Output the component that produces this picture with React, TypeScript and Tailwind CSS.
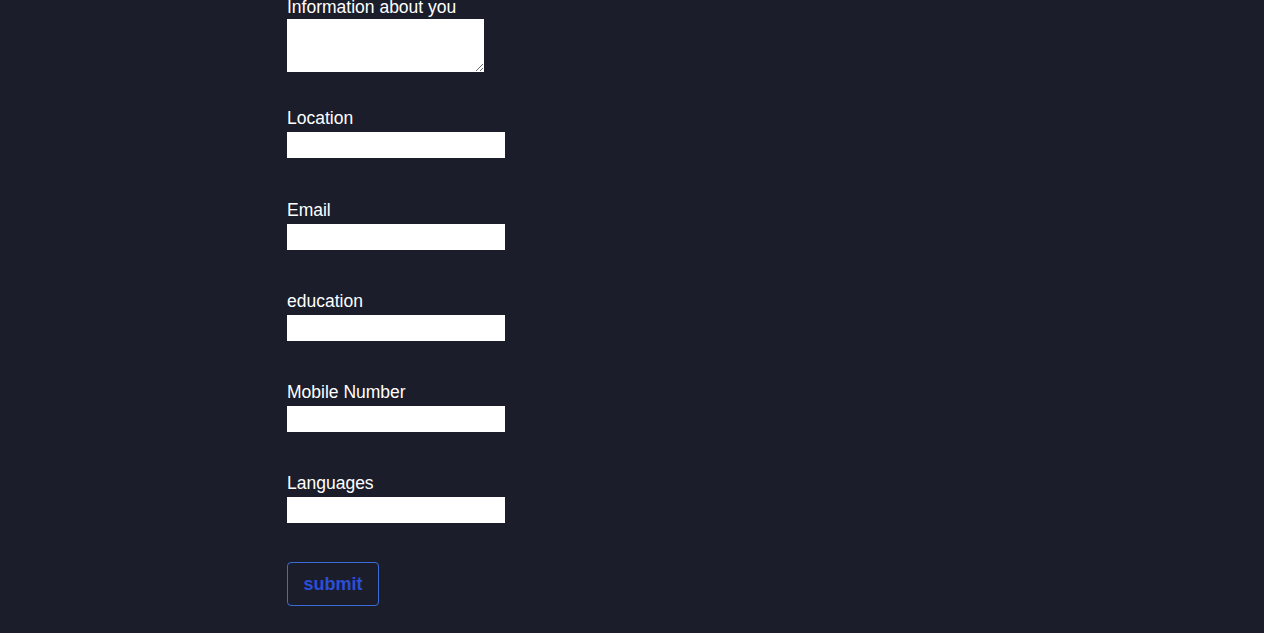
const fields = ["Location", "Email", "education", "Mobile Number", "Languages"];

export default function App() {
  return (
    <div
      className="min-h-[635px] w-full bg-[#1b1d2b] pl-[287px] text-white"
      style={{ fontFamily: '"Liberation Sans", Arial, sans-serif' }}
    >
      <form className="flex flex-col items-start -mt-[2px]">
        <label className="block text-[17.5px] leading-[18px]">Information about you</label>
        <textarea className="mt-[3px] block h-[53px] w-[197px] bg-white text-black" />

        {fields.map((f, i) => (
          <div key={f} className={i === 0 ? "mt-[37px]" : i === 1 ? "mt-[43px]" : "mt-[42px]"}>
            <label className="block text-[17.5px] leading-[18px]">{f}</label>
            <input type="text" className="mt-[5px] block h-[26px] w-[218px] bg-white text-black" />
          </div>
        ))}

        <button
          type="button"
          className="mt-[39px] h-[44px] w-[92px] rounded-[4px] border border-[#3a6ed6] text-[18px] font-bold text-[#2b4fd9]"
        >
          submit
        </button>
      </form>
    </div>
  );
}
